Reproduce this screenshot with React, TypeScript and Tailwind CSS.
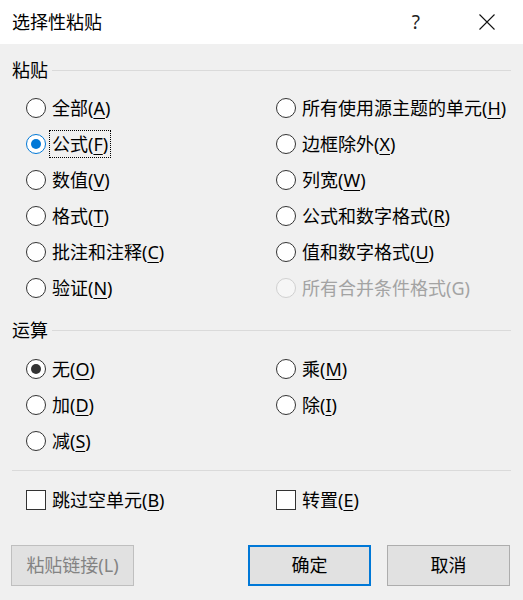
import React from "react";

const font = {
  fontFamily: '"Noto Sans", "Noto Sans CJK SC", sans-serif',
};

type Opt = {
  label: string;
  key?: string;
  checked?: "blue" | "dark";
  focus?: boolean;
  disabled?: boolean;
};

function Label({ label, k }: { label: string; k?: string }) {
  return (
    <span>
      {label}
      {k ? (
        <>
          (<span className="underline decoration-1 underline-offset-[3px]">{k}</span>)
        </>
      ) : null}
    </span>
  );
}

function Radio({ opt }: { opt: Opt }) {
  const ring = opt.disabled
    ? "border-[#d0d0d0] bg-[#f6f6f6]"
    : opt.checked === "blue"
    ? "border-[#0078d7] bg-white"
    : "border-[#333333] bg-white";
  return (
    <div className="flex h-[36px] items-center">
      <span
        className={`flex h-5 w-5 shrink-0 items-center justify-center rounded-full border-[1.5px] ${ring}`}
      >
        {opt.checked === "blue" && (
          <span className="h-[10px] w-[10px] rounded-full bg-[#0078d7]" />
        )}
        {opt.checked === "dark" && (
          <span className="h-[10px] w-[10px] rounded-full bg-[#333333]" />
        )}
      </span>
      <span
        className={`ml-[4px] flex h-[26px] items-center px-[2px] text-[18px] leading-[26px] ${
          opt.focus ? "outline outline-1 outline-dotted outline-black" : ""
        } ${opt.disabled ? "text-[#a3a3a3]" : "text-black"}`}
      >
        {opt.disabled ? (
          <span>{opt.label}</span>
        ) : (
          <Label label={opt.label} k={opt.key} />
        )}
      </span>
    </div>
  );
}

function Check({ label, k }: { label: string; k: string }) {
  return (
    <div className="flex h-[36px] items-center">
      <span className="h-5 w-5 shrink-0 border-[1.5px] border-[#333333] bg-white" />
      <span className="ml-[6px] text-[18px] leading-[26px] text-black">
        <Label label={label} k={k} />
      </span>
    </div>
  );
}

function Section({ title }: { title: string }) {
  return (
    <div className="flex h-[26px] items-center">
      <span className="text-[18px] leading-[26px] text-black">{title}</span>
      <span className="ml-[4px] h-px flex-1 bg-[#dadada]" />
    </div>
  );
}

const paste: Opt[] = [
  { label: "全部", key: "A" },
  { label: "所有使用源主题的单元", key: "H" },
  { label: "公式", key: "F", checked: "blue", focus: true },
  { label: "边框除外", key: "X" },
  { label: "数值", key: "V" },
  { label: "列宽", key: "W" },
  { label: "格式", key: "T" },
  { label: "公式和数字格式", key: "R" },
  { label: "批注和注释", key: "C" },
  { label: "值和数字格式", key: "U" },
  { label: "验证", key: "N" },
  { label: "所有合并条件格式(G)", disabled: true },
];

const ops: Opt[] = [
  { label: "无", key: "O", checked: "dark" },
  { label: "乘", key: "M" },
  { label: "加", key: "D" },
  { label: "除", key: "I" },
  { label: "减", key: "S" },
];

export default function App() {
  return (
    <div className="flex h-[600px] w-[523px] flex-col bg-[#f0f0f0]" style={font}>
      <div className="flex h-[44px] items-center bg-white pl-3">
        <span className="text-[18px] leading-[26px] text-black">选择性粘贴</span>
        <span className="ml-auto text-[19px] leading-none text-[#222]">?</span>
        <svg className="ml-[59px] mr-[28px]" width="16" height="16" viewBox="0 0 16 16">
          <path d="M0.5 0.5 L15.5 15.5 M15.5 0.5 L0.5 15.5" stroke="#111" strokeWidth="1.1" />
        </svg>
      </div>

      <div className="px-3">
        <div className="mt-[13px]">
          <Section title="粘贴" />
        </div>
        <div className="mt-[7px] grid grid-cols-[250px_1fr] pl-[14px]">
          {paste.map((o) => (
            <Radio key={o.label} opt={o} />
          ))}
        </div>

        <div className="mt-[11px]">
          <Section title="运算" />
        </div>
        <div className="mt-[8px] grid grid-cols-[250px_1fr] pl-[14px]">
          {ops.map((o) => (
            <Radio key={o.label} opt={o} />
          ))}
        </div>

        <div className="mt-[11px] h-px bg-[#dadada]" />

        <div className="mt-[11px] grid grid-cols-[250px_1fr] pl-[14px]">
          <Check label="跳过空单元" k="B" />
          <Check label="转置" k="E" />
        </div>
      </div>

      <div className="mt-[27px] flex pl-[11px] pr-[13px]">
        <button className="h-[41px] w-[123px] border border-[#bfbfbf] bg-[#e1e1e1] text-[18px] text-[#838383]">
          粘贴链接(L)
        </button>
        <div className="ml-auto flex gap-[16px]">
          <button className="h-[41px] w-[123px] border-2 border-[#0078d7] bg-[#e1e1e1] text-[18px] text-black">
            确定
          </button>
          <button className="h-[41px] w-[123px] border border-[#adadad] bg-[#e1e1e1] text-[18px] text-black">
            取消
          </button>
        </div>
      </div>
    </div>
  );
}
